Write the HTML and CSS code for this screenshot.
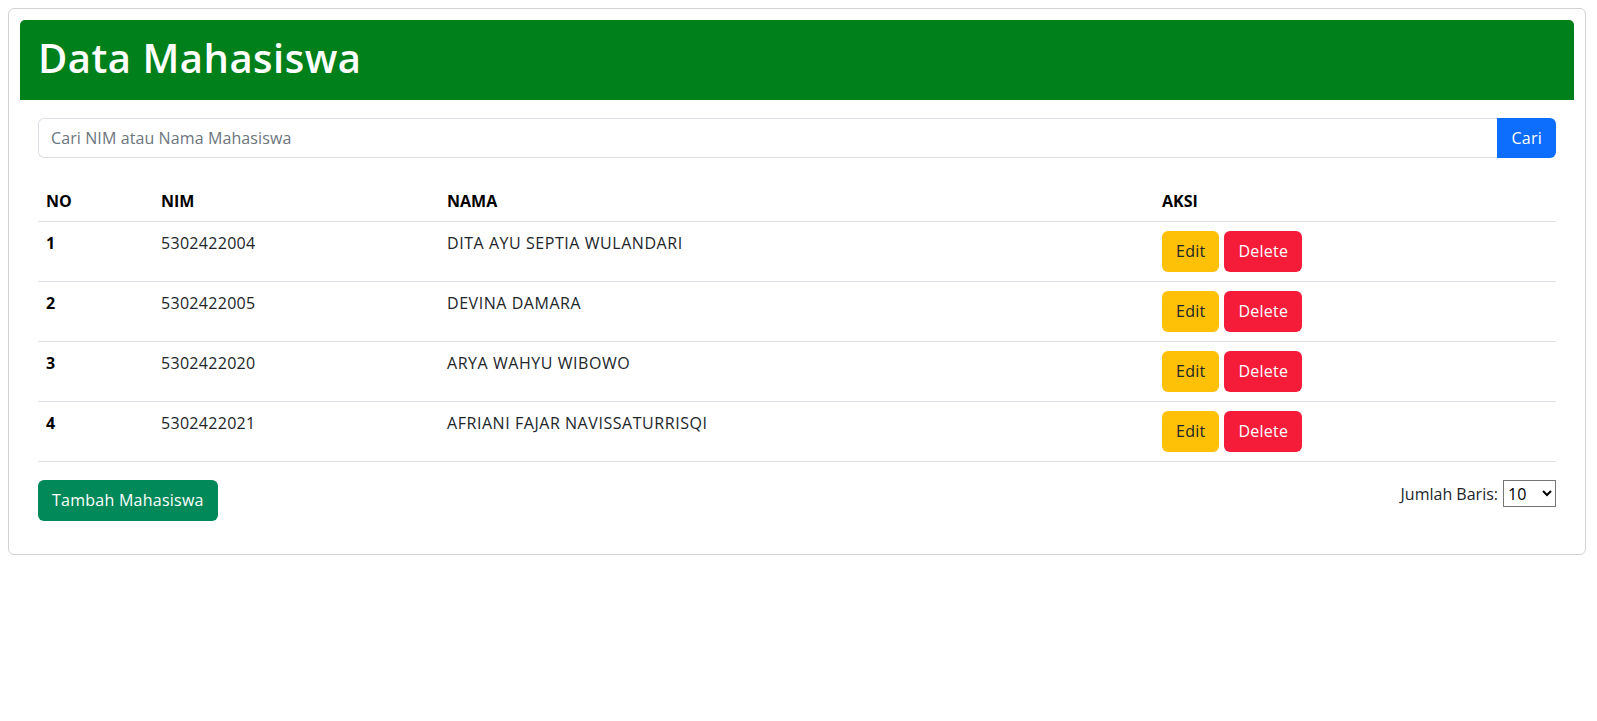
FILE: index.html
```html
<!DOCTYPE html>
<html lang="id">
<head>
<meta charset="utf-8">
<title>Data Mahasiswa</title>
<link rel="stylesheet" href="styles.css">
</head>
<body>
<div class="card">
  <div class="card-header">
    <h1 class="title">Data Mahasiswa</h1>
  </div>
  <div class="card-body">
    <form class="search">
      <input type="text" class="search-input" placeholder="Cari NIM atau Nama Mahasiswa">
      <button type="button" class="btn btn-primary btn-search">Cari</button>
    </form>
    <table class="table">
      <thead>
        <tr>
          <th class="col-no">NO</th>
          <th class="col-nim">NIM</th>
          <th class="col-nama">NAMA</th>
          <th class="col-aksi">AKSI</th>
        </tr>
      </thead>
      <tbody>
        <tr>
          <td class="cell-no">1</td>
          <td class="cell-nim">5302422004</td>
          <td class="cell-nama">DITA AYU SEPTIA WULANDARI</td>
          <td><div class="actions"><button class="btn btn-warning">Edit</button><button class="btn btn-danger">Delete</button></div></td>
        </tr>
        <tr>
          <td class="cell-no">2</td>
          <td class="cell-nim">5302422005</td>
          <td class="cell-nama">DEVINA DAMARA</td>
          <td><div class="actions"><button class="btn btn-warning">Edit</button><button class="btn btn-danger">Delete</button></div></td>
        </tr>
        <tr>
          <td class="cell-no">3</td>
          <td class="cell-nim">5302422020</td>
          <td class="cell-nama">ARYA WAHYU WIBOWO</td>
          <td><div class="actions"><button class="btn btn-warning">Edit</button><button class="btn btn-danger">Delete</button></div></td>
        </tr>
        <tr>
          <td class="cell-no">4</td>
          <td class="cell-nim">5302422021</td>
          <td class="cell-nama">AFRIANI FAJAR NAVISSATURRISQI</td>
          <td><div class="actions"><button class="btn btn-warning">Edit</button><button class="btn btn-danger">Delete</button></div></td>
        </tr>
      </tbody>
    </table>
    <div class="footer">
      <button type="button" class="btn btn-success">Tambah Mahasiswa</button>
      <div class="rows">
        <label class="rows-label" for="jumlah">Jumlah Baris:</label>
        <select id="jumlah" class="rows-select">
          <option>5</option>
          <option selected>10</option>
          <option>25</option>
          <option>50</option>
        </select>
      </div>
    </div>
  </div>
</div>
</body>
</html>
```

FILE: styles.css
```css
* {
  box-sizing: border-box;
}

body {
  margin: 8px;
  font-family: "Segoe UI", "Open Sans", "Noto Sans", sans-serif;
  font-size: 16px;
  line-height: 1.5;
  color: #212529;
  background: #ffffff;
}

.card {
  margin-right: 3px;
  border: 1px solid #d2d2d2;
  border-radius: 6px;
  padding: 11px;
}

.card-header {
  display: flex;
  align-items: center;
  height: 80px;
  padding: 0 18px;
  background: #00801a;
  border-radius: 5px 5px 0 0;
}

.title {
  margin: 0 0 4px;
  font-size: 40px;
  font-weight: 600;
  line-height: 1.2;
  letter-spacing: 0.5px;
  color: #ffffff;
}

.card-body {
  padding: 18px 18px 22px;
}

.search {
  display: flex;
  height: 40px;
  margin: 0 0 23px;
}

.search-input {
  flex: 1;
  min-width: 0;
  height: 40px;
  padding: 0 12px;
  border: 1px solid #dee2e6;
  border-right: none;
  border-radius: 6px 0 0 6px;
  font: inherit;
  letter-spacing: 0.1px;
  color: #212529;
  outline: none;
}

.search-input::placeholder {
  color: #6c757d;
}

.btn {
  height: 41px;
  padding: 0 14px;
  border: none;
  border-radius: 6px;
  font: inherit;
  line-height: 41px;
  letter-spacing: 0.25px;
  cursor: pointer;
}

.btn-search {
  height: 40px;
  line-height: 40px;
  border-radius: 0 6px 6px 0;
}

.btn-primary {
  background: #0d6efd;
  color: #ffffff;
}

.btn-warning {
  background: #ffc107;
  color: #212529;
}

.btn-danger {
  background: #f51c3a;
  color: #ffffff;
}

.btn-success {
  background: #02895a;
  color: #ffffff;
}

.table {
  width: 100%;
  border-collapse: collapse;
  margin-bottom: 18px;
}

.table th {
  padding: 8px;
  text-align: left;
  font-weight: 700;
  color: #000000;
  border-bottom: 1px solid #dee2e6;
  line-height: 24px;
}

.table td {
  padding: 9px 8px;
  vertical-align: top;
  border-bottom: 1px solid #dee2e6;
  line-height: 24px;
  color: #212529;
}

.col-no {
  width: 115px;
}

.col-nim {
  width: 286px;
}

.col-nama {
  width: 715px;
}

.table .cell-no {
  font-weight: 700;
  color: #000000;
}

.table .cell-nim {
  letter-spacing: 0.3px;
}

.table .cell-nama {
  letter-spacing: 0.55px;
}

.actions {
  display: flex;
  gap: 5px;
}

.footer {
  display: flex;
  justify-content: space-between;
  align-items: flex-start;
}

.rows {
  display: flex;
  align-items: baseline;
  gap: 5px;
}

.rows-label {
  color: #212529;
}

.rows-select {
  width: 53px;
  height: 27px;
  font: inherit;
  font-size: 16px;
  border: 1px solid #767676;
  border-radius: 0;
  background: #ffffff;
  color: #000000;
}
```
